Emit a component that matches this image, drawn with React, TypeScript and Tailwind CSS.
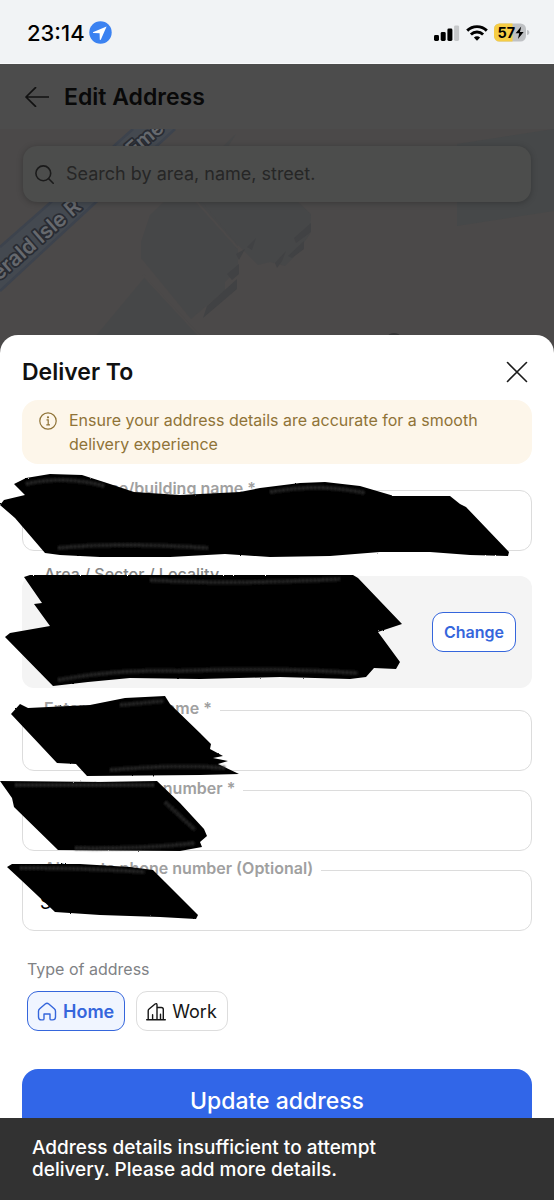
import React, { useState } from 'react';

function StatusBar() {
  return (
    <div className="flex h-16 items-center justify-between border-b border-[#f9fafb] bg-[#f1f3f5] pl-[27px] pr-6 pt-0.5 text-black">
      <div className="flex items-center gap-1">
        <span className="text-[22px] font-medium leading-7">23:14</span>
        <svg className="size-[23px]" viewBox="0 0 23 23" aria-hidden="true">
          <circle cx="11.5" cy="11.5" r="11.2" fill="#3b82f1" />
          <path d="M17.600 5.600 4.400 11c-.7.3-.6 1 .1 1l6.100.2.200 6.200c0 .7.8.8 1.100.1z" fill="#fff" />
        </svg>
      </div>
      <div className="flex items-center gap-[6px]">
        <svg className="h-4 w-[26px]" viewBox="0 0 26 16" aria-hidden="true">
          <rect x="0" y="10" width="5" height="6" rx="1.4" />
          <rect x="6.7" y="7" width="5" height="9" rx="1.4" />
          <rect x="13.4" y="3.6" width="5" height="12.4" rx="1.4" />
          <rect x="20.1" y="0.4" width="5" height="15.6" rx="1.4" fill="#c6c8ca" />
        </svg>
        <svg className="h-4 w-[22px]" viewBox="0 0 22 16" fill="none" stroke="#000" strokeWidth="2.9" aria-hidden="true">
          <path d="M1.2 5.600a14 14 0 0 1 19.600 0" />
          <path d="M4.900 9.500a8.800 8.800 0 0 1 12.200 0" />
          <path d="M11 15.800 7.900 12.600a4.400 4.400 0 0 1 6.200 0z" fill="#000" stroke="none" />
        </svg>
        <svg className="h-[19px] w-9" viewBox="0 0 36 19" role="img" aria-label="Battery 57%, charging">
          <defs>
            <clipPath id="battery">
              <rect x="0" y="0.5" width="32" height="18" rx="5.5" />
            </clipPath>
          </defs>
          <g clipPath="url(#battery)">
            <rect width="32" height="19" fill="#bfc1c4" />
            <rect width="18.5" height="19" fill="#f6cd45" />
          </g>
          <path d="M33 7c1.800.3 2.400 1.300 2.400 2.500S34.800 11.700 33 12z" fill="#bfc1c4" />
          <text x="3.500" y="14.800" fontSize="14.500" fontWeight="700">57</text>
          <path d="m27.200 3.600-5.600 6.700h3.600l-1.200 5.600 5.600-6.900h-3.600z" />
        </svg>
      </div>
    </div>
  );
}

function MapDrawing() {
  return (
    <svg className="absolute left-0 top-0 h-[226px] w-[554px]" viewBox="0 129 554 226" aria-hidden="true">
      <path d="M133 129 50 203 0 247v44l95-88 80-74z" fill="#444950" />
      <path d="M133 129 50 203 0 247M175 129 95 203 0 291" stroke="#3d434d" strokeWidth="2.500" fill="none" />
      <g fill="#464748">
        <path d="M236 134 150 215l-9 27v16l50 61 34-29v-8l13-13v-25l18-18-45-52z" />
        <path d="m190 200 95-10 26 24-1 20-17 24-8 8-15-4-12 3-20-20-35-42z" />
        <path d="m145 277 63 66H90z" />
      </g>
      <path fill="#414244" d="m203 318 34-29v-10l-30 27zM227 274l12-10v10l-7 6zM236 254l9-5-6 11zM247 247l9-9-4 12zM275 263l11-12-4 10-5 7zM288 256l16-15v8l-12 9zM294 238l17-15v9l-15 11z" />
      <path d="m195 200 43 48M143 275l62 67" stroke="#4b4949" strokeWidth="2" />
      <path d="M457 203v23l97-15v-82l-97 15z" fill="#464849" />
      <ellipse cx="394" cy="336" rx="6" ry="3" fill="#343536" />
      <g fontSize="20" fontWeight="600" fill="#66696e" stroke="#292c33" strokeWidth="3.500" paintOrder="stroke" strokeLinejoin="round">
        <text transform="translate(-25 302) rotate(-41)" fontSize="21">Emerald Isle R</text>
        <text transform="translate(133 157) rotate(-40)">Eme</text>
      </g>
    </svg>
  );
}

function CoveredPage() {
  return (
    <div className="bg-[#4b4949]">
      <header className="flex h-[65px] items-center gap-[15px] bg-[#4c4c4c] pl-[25px]">
        <button type="button" aria-label="Back">
          <svg className="h-5 w-6" viewBox="0 0 24 20" fill="none" stroke="#111" strokeWidth="1.700" strokeLinecap="round" strokeLinejoin="round">
            <path d="M23.500 10H1M10.500.700 1 10l9.500 9.300" />
          </svg>
        </button>
        <h1 className="text-[23px] font-semibold leading-7 text-[#090909]">Edit Address</h1>
      </header>
      <div className="relative h-[226px] overflow-hidden px-[23px] pt-[17px]">
        <MapDrawing />
        <label className="relative flex h-14 items-center gap-3 rounded-[14px] bg-[#4c4d4c] pl-3 shadow-[0_1px_6px_rgba(0,0,0,0.25)]">
          <svg className="size-[19px]" viewBox="0 0 19 19" fill="none" stroke="#1b1b1b" strokeWidth="1.600" strokeLinecap="round">
            <circle cx="8.300" cy="8.300" r="7.400" />
            <path d="m13.700 13.700 4.500 4.500" />
          </svg>
          <input
            type="search"
            aria-label="Search by area, name, street."
            placeholder="Search by area, name, street."
            className="min-w-0 flex-1 bg-transparent text-lg text-[#1f1f1f] outline-none placeholder:text-[#262626]"
          />
        </label>
      </div>
    </div>
  );
}

function Field({ id, label, value = '' }: { id: string; label: string; value?: string }) {
  return (
    <div className="relative">
      <input
        id={id}
        defaultValue={value}
        className="block h-[61px] w-full rounded-xl border border-[#dcdcdc] bg-white px-[17px] pt-1 text-lg text-black outline-none"
      />
      <label htmlFor={id} className="absolute -top-[14px] left-[15px] bg-white pl-[7px] pr-2 text-base font-semibold leading-6 text-[#a0a0a0]">
        {label}
      </label>
    </div>
  );
}

function Scribbles() {
  return (
    <svg className="pointer-events-none absolute left-0 top-0 h-[480px] w-[554px]" viewBox="0 464 554 480" aria-hidden="true">
      <defs>
        <filter id="rough" x="-5%" y="-5%" width="110%" height="110%">
          <feTurbulence type="fractalNoise" baseFrequency="0.400" numOctaves="1" seed="4" />
          <feDisplacementMap in="SourceGraphic" scale="2" />
          <feGaussianBlur stdDeviation="0.300" />
        </filter>
        <filter id="soft" x="-5%" y="-50%" width="110%" height="200%">
          <feGaussianBlur stdDeviation="0.800" />
        </filter>
      </defs>
      <g filter="url(#rough)">
        <path d="M14 484 26 478 50 474 82 475 110 484 134 492 180 495 240 492 260 488 300 483 325 482 360 486 394 496 450 496 460 504 466 507 509 552 508 556 470 555 430 552 380 552 330 556 270 557 225 554 170 557 100 557 60 555 45 553 15 518 0 505 4 500 25 495z" />
        <path d="M24 577 30 575 353 575 358 578 402 624 378 632 400 662 396 669 374 668 366 677 350 679 280 677 200 679 130 678 88 682 53 686 5 637 10 633 50 626 34 604 42 603z" />
        <path d="M11 714 20 704 28 708 90 705 125 698 165 696 170 704 200 733 211 744 210 749 223 756 213 758 228 761 218 764 239 774 200 775 87 776 76 764 57 763z" />
        <path d="M0 781 100 782 157 781 180 803 204 829 207 836 200 842 202 847 180 851 58 850 14 807 12 798z" />
        <path d="M7 867 12 864 80 864 130 867 153 870 165 882 198 915 196 919 160 917 100 915 55 912 20 879z" />
      </g>
      <g fill="none" stroke="#2b2b2b" strokeWidth="4" strokeDasharray="3 1" filter="url(#soft)">
        <path d="M26 484q38-9 78 2M58 548q60-6 150 0M270 492q50-9 95 1M150 580q80 5 190-1M58 680q60-11 120-9 90-4 180 2M120 705l44-4M110 770q70-6 115-2M15 785h140M75 848q70 1 120-5M165 802l30 28M20 868q70 0 125 4" />
      </g>
    </svg>
  );
}

const typeIcons: Record<string, React.ReactNode> = {
  Home: <path d="M1.500 9.200c0-1 .4-1.700 1.200-2.400L8.200 2c1.100-.9 2.500-.9 3.600 0l5.500 4.800c.8.700 1.200 1.400 1.200 2.400v5.800c0 1.900-1 2.900-2.900 2.900h-1.400c-.8 0-1.200-.4-1.200-1.200V12H7v4.700c0 .8-.4 1.200-1.200 1.200H4.400c-1.900 0-2.900-1-2.900-2.900z" />,
  Work: <path d="M.700 17.700h18.600M2.200 17.700V8.800c0-.8.300-1.300.9-1.800l6-5c1-.8 1.900-.3 1.900.9v14.800M11 5.500h4.300c1.300 0 2 .7 2 2v10.200M6.600 17.700v-5M14.500 17.700v-5.500" />,
};

function AddressTypes() {
  const [type, setType] = useState('Home');
  return (
    <fieldset className="px-[27px]">
      <legend className="text-base leading-6 text-[#808285]">Type of address</legend>
      <div className="flex gap-[11px] pt-[10px]">
        {Object.keys(typeIcons).map((name) => (
          <button
            key={name}
            type="button"
            aria-pressed={type === name}
            onClick={() => setType(name)}
            className={
              type === name
                ? 'flex h-10 items-center gap-[6px] rounded-[11px] border border-[#3566dc] bg-[#f0f5ff] pl-[9px] pr-[10px] pt-0.5 text-lg font-semibold text-[#3566dc]'
                : 'flex h-10 items-center gap-[6px] rounded-[11px] border border-[#dddddd] bg-white pl-[9px] pr-[10px] pt-0.5 text-lg text-[#161616]'
            }
          >
            <svg className="size-5" viewBox="0 0 20 20" fill="none" stroke="currentColor" strokeWidth="1.400" strokeLinejoin="round" strokeLinecap="round">
              {typeIcons[name]}
            </svg>
            {name}
          </button>
        ))}
      </div>
    </fieldset>
  );
}

export default function App() {
  return (
    <div className="flex min-h-screen flex-col bg-[#4b4949] font-['Inter',sans-serif]">
      <StatusBar />
      <CoveredPage />
      <main className="relative -mt-5 flex-1 rounded-t-[18px] bg-white pb-4 pt-[23px]">
        <div className="flex items-center justify-between px-[22px]">
          <h2 className="text-[23px] font-semibold leading-7 text-[#111]">Deliver To</h2>
          <button type="button" aria-label="Close" className="pr-1">
            <svg className="size-[22px]" viewBox="0 0 22 22" stroke="#1b1b1b" strokeWidth="1.600" strokeLinecap="round">
              <path d="m1.500 1.500 19 19M20.500 1.500l-19 19" />
            </svg>
          </button>
        </div>
        <div className="mx-[22px] mt-[14px] flex gap-3 rounded-2xl bg-[#fdf6ea] py-2 pl-[17px] pr-8 text-[#8f7337]">
          <svg className="mt-1 size-[18px] shrink-0" viewBox="0 0 18 18" fill="none" stroke="currentColor" strokeWidth="1.200">
            <circle cx="9" cy="9" r="8.200" />
            <path d="M7.500 7.900H9.200v4.800M7.300 12.900h3.700" />
            <circle cx="9" cy="5.300" r="0.500" fill="currentColor" />
          </svg>
          <p className="text-base leading-6">Ensure your address details are accurate for a smooth delivery experience</p>
        </div>
        <form onSubmit={(e) => e.preventDefault()}>
          <div className="relative px-[22px] pt-[26px]">
            <Field id="building" label="Flat/House/building name *" />
            <div className="relative mt-[25px] flex h-28 items-center justify-between rounded-xl bg-[#f4f4f4] px-4">
              <span className="absolute -top-[14px] left-[22px] text-base font-medium leading-6 text-[#858585]">Area / Sector / Locality</span>
              <span aria-hidden="true" />
              <button type="button" className="h-10 rounded-[11px] border border-[#3566dc] bg-white px-[11px] text-base font-semibold text-[#3566dc]">
                Change
              </button>
            </div>
            <div className="mt-[22px] flex flex-col gap-[19px]">
              <Field id="name" label="Enter your full name *" />
              <Field id="phone" label="10-digit mobile number *" />
              <Field id="alternate" label="Alternate phone number (Optional)" value="S" />
            </div>
            <Scribbles />
          </div>
          <div className="pt-[26px]">
            <AddressTypes />
          </div>
          <div className="px-[22px] pt-[38px]">
            <button type="submit" className="h-16 w-full rounded-2xl bg-[#3166e8] text-[23px] font-medium text-white">
              Update address
            </button>
          </div>
        </form>
      </main>
      <div role="alert" className="fixed inset-x-0 bottom-0 bg-[#323232] px-8 py-[19px] text-[19px] font-medium leading-[22px] text-white">
        <p className="max-w-[400px]">Address details insufficient to attempt delivery. Please add more details.</p>
      </div>
    </div>
  );
}
